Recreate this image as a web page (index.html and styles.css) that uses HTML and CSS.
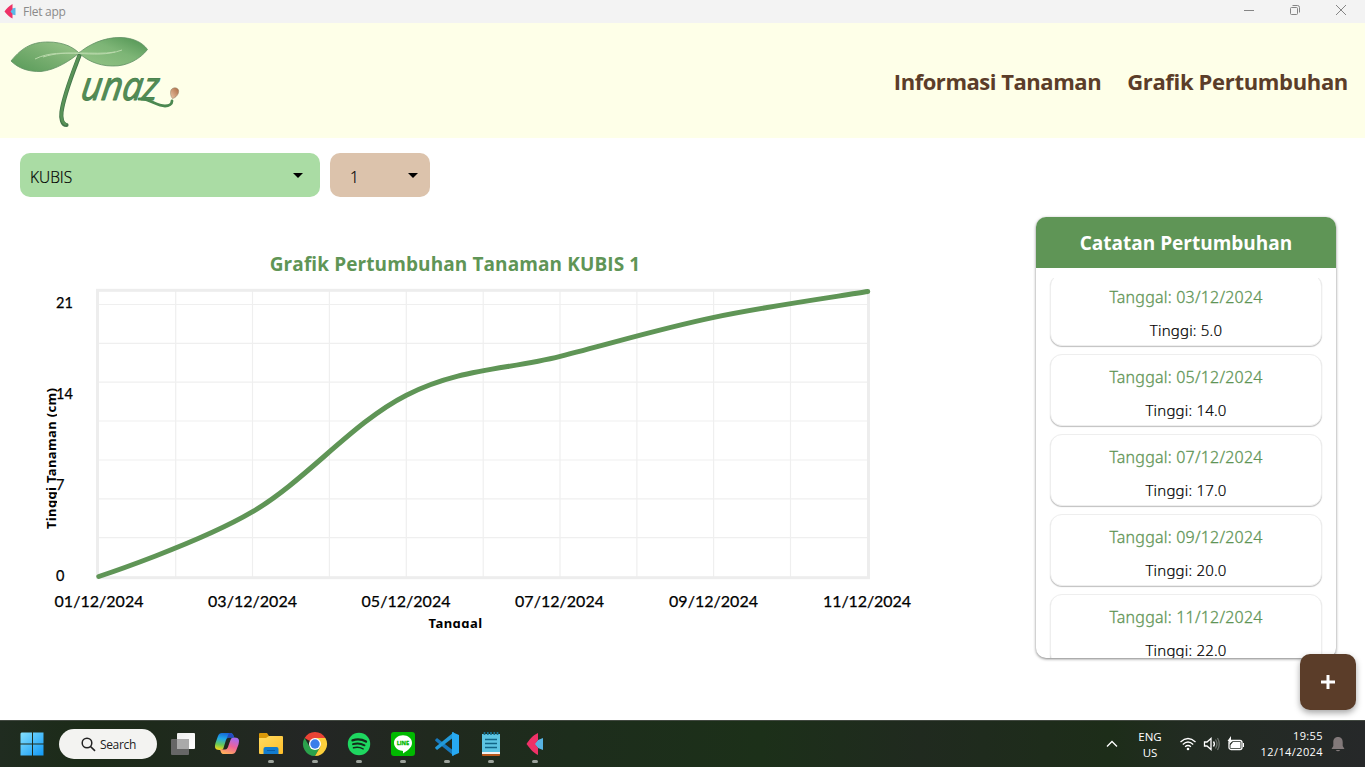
FILE: index.html
```html
<!DOCTYPE html>
<html lang="id">
<head>
<meta charset="utf-8">
<title>Flet app</title>
<link rel="stylesheet" href="styles.css">
</head>
<body>
<div class="titlebar">
  <svg class="app-icon" width="12" height="16" viewBox="0 0 12 16"><path d="M8 4.5l3.5-.8v7.6L8 10.500 5.500 7.500z" fill="#5cb8e8"/><path d="M8.500 0v5L6.500 7.500l2 2.500v4.500C5.500 13.500 2.500 10 .5 7.500 2.500 4.500 5.500 1.500 8.500 0z" fill="#ee3167"/></svg>
  <span class="app-title">Flet app</span>
  <div class="window-buttons">
    <svg width="12" height="12" viewBox="0 0 12 12"><path d="M1 6.500h10"/></svg>
    <svg width="12" height="12" viewBox="0 0 12 12"><rect x="1.500" y="3.500" width="7" height="7" rx="1"/><path d="M3.500 1.500h5a2 2 0 0 1 2 2v5"/></svg>
    <svg width="12" height="12" viewBox="0 0 12 12"><path d="M1 1l10 10M11 1L1 11"/></svg>
  </div>
</div>

<header class="header">
  <svg class="logo" width="200" height="115" viewBox="0 23 200 115" role="img" aria-label="Tunaz">
    <defs>
      <linearGradient id="leafA" x1="0" y1="1" x2="1" y2="0"><stop offset="0" stop-color="#579a58"/><stop offset=".5" stop-color="#78ae70"/><stop offset="1" stop-color="#9bc78b"/></linearGradient>
      <linearGradient id="leafB" x1="0" y1="1" x2="1" y2="0"><stop offset="0" stop-color="#94c486"/><stop offset=".55" stop-color="#7db576"/><stop offset="1" stop-color="#4d9150"/></linearGradient>
      <linearGradient id="seed" x1="0" y1="1" x2="1" y2="0"><stop offset="0" stop-color="#edc8aa"/><stop offset="1" stop-color="#a9683f"/></linearGradient>
    </defs>
    <path d="M80 54C74 70 64 94 61.500 112c-.8 6 .5 13 5 13" fill="none" stroke="#44764c" stroke-width="4.200" stroke-linecap="round"/>
    <path d="M79 56C73 72 64 94 61.500 112c-.6 5 .5 11 4 12" fill="none" stroke="#599357" stroke-width="2.600" stroke-linecap="round"/>
    <path d="M11 61C23 46 34 42 48 42c15 0 25 5 31 11-8 7-23 17-38 18.500C28 72 18 68 11 61z" fill="url(#leafA)" stroke="#5f8f63" stroke-width=".8"/>
    <path d="M79 53c9-8 25-16 42-15.500 12 .5 21 4.500 26.500 12-7 9-20 17-35 16.500C97 66 85 59 79 53z" fill="url(#leafB)" stroke="#5f8f63" stroke-width=".8"/>
    <path d="M35 59c14-7 29-6 44-5.500 14 .5 28 2 43-3.500M43 57c12-4 24-4 36-4 13 0 25 1 36-1" fill="none" stroke="#b9d9ab" stroke-width="1"/>
    <text class="logo-text" x="0" y="0" textLength="77" lengthAdjust="spacingAndGlyphs" transform="translate(80 100) skewX(-8)">unaz</text>
    <path d="M139 99c10-1 17 7 26 7 4 0 7-2 7-5" fill="none" stroke="#4b8850" stroke-width="2.800" stroke-linecap="round"/>
    <path d="M171 90c2-3 6-3 7.500 0 1 4-3 8-6 8.500-2-2-2.500-6-1.500-8.500z" fill="url(#seed)" stroke="#8b7a60" stroke-width=".5"/>
  </svg>
  <nav class="nav"><a class="nav-info">Informasi Tanaman</a><a class="nav-graph">Grafik Pertumbuhan</a></nav>
</header>

<main class="main">
  <section class="left">
    <div class="filters">
      <div class="select select-plant"><span>KUBIS</span><i class="caret"></i></div>
      <div class="select select-number"><span>1</span><i class="caret"></i></div>
    </div>
    <h1 class="chart-title"><span>Grafik Pertumbuhan Tanaman KUBIS 1</span></h1>
    <svg class="chart" width="920" height="360" viewBox="0 280 920 360">
      <defs>
        <clipPath id="clipY"><rect x="40" y="380" width="17" height="160"/></clipPath>
        <clipPath id="clipX"><rect x="420" y="610" width="70" height="18"/></clipPath>
      </defs>
      <g class="grid">
        <path d="M175.700 290v287M252.500 290v287M329.400 290v287M406.300 290v287M483.200 290v287M560 290v287M636.900 290v287M713.600 290v287M790.500 290v287"/>
        <path d="M98 304.500h770M98 343.400h770M98 382.200h770M98 421h770M98 460h770M98 498.800h770M98 537.600h770"/>
      </g>
      <rect class="frame" x="97.500" y="290.300" width="771" height="287.400"/>
      <path class="curve" d="M98.800 576.500C98.800 576.500 198.800 543.400 252.600 511.700C306.400 480 352.600 422.400 406.400 395.200C460.200 368 506.400 369.900 560.200 356.300C614 342.700 660.100 328.700 713.900 317.400C767.700 306.100 840.800 296 867.700 291.500"/>
      <g class="y-labels">
        <text x="56" y="308" textLength="17">21</text><text x="56" y="399" textLength="17">14</text><text x="56" y="490">7</text><text x="56" y="581">0</text>
      </g>
      <g class="x-labels">
        <text x="54.500" y="607" textLength="89">01/12/2024</text><text x="208" y="607" textLength="89">03/12/2024</text><text x="361.500" y="607" textLength="89">05/12/2024</text><text x="515" y="607" textLength="89">07/12/2024</text><text x="669" y="607" textLength="89">09/12/2024</text><text x="823" y="607" textLength="88">11/12/2024</text>
      </g>
      <g clip-path="url(#clipY)"><text class="axis" transform="translate(55.500 529) rotate(-90)" textLength="141">Tinggi Tanaman (cm)</text></g>
      <g clip-path="url(#clipX)"><text class="axis" x="428.500" y="627.500" textLength="53.500">Tanggal</text></g>
    </svg>
  </section>

  <aside class="panel">
    <h2 class="panel-title"><span>Catatan Pertumbuhan</span></h2>
    <div class="records">
      <div class="record record-first"><p class="date">Tanggal: 03/12/2024</p><p class="height">Tinggi: 5.0</p></div>
      <div class="record"><p class="date">Tanggal: 05/12/2024</p><p class="height">Tinggi: 14.0</p></div>
      <div class="record"><p class="date">Tanggal: 07/12/2024</p><p class="height">Tinggi: 17.0</p></div>
      <div class="record"><p class="date">Tanggal: 09/12/2024</p><p class="height">Tinggi: 20.0</p></div>
      <div class="record"><p class="date">Tanggal: 11/12/2024</p><p class="height">Tinggi: 22.0</p></div>
    </div>
  </aside>
  <button class="fab" aria-label="Tambah"><svg width="14" height="14" viewBox="0 0 14 14"><path d="M7 0v14M0 7h14" stroke="#fff" stroke-width="3"/></svg></button>
</main>

<footer class="taskbar">
  <div class="apps">
    <div class="start"><svg width="24" height="24" viewBox="0 0 24 24"><defs><linearGradient id="win" x1="0" y1="0" x2="1" y2="1"><stop offset="0" stop-color="#84e0ff"/><stop offset="1" stop-color="#1199f5"/></linearGradient></defs><path fill="url(#win)" d="M1.500.5H12v11H.5v-10zM13 .5h10.500v11H13zM.5 12.500H12v11H.5zM13 12.500h10.500v11H13z"/></svg></div>
    <div class="search"><svg width="15" height="15" viewBox="0 0 15 15"><circle cx="6" cy="6" r="4.800" fill="none" stroke="#222" stroke-width="1.500"/><path d="M9.500 9.500l4.500 4.300" stroke="#222" stroke-width="1.600"/></svg><span>Search</span></div>
    <div class="app app-tasks"><svg width="26" height="26" viewBox="0 0 26 26"><defs><linearGradient id="tv" x1="0" y1="0" x2="1" y2="1"><stop offset="0" stop-color="#eee"/><stop offset="1" stop-color="#fff"/></linearGradient></defs><rect x="7" y="1" width="18" height="16" rx="1" fill="url(#tv)"/><rect x="1" y="7" width="18" height="16" rx="1" fill="#666"/><path d="M7 7h12v10H7z" fill="#aaa"/></svg></div>
    <div class="app app-copilot"><svg width="26" height="26" viewBox="0 0 26 26"><defs><linearGradient id="ca" x1=".5" y1="0" x2=".3" y2="1"><stop offset="0" stop-color="#1668d8"/><stop offset=".35" stop-color="#20a9e8"/><stop offset=".7" stop-color="#68c956"/><stop offset="1" stop-color="#f5d71c"/></linearGradient><linearGradient id="cb" x1=".7" y1="0" x2=".3" y2="1"><stop offset="0" stop-color="#a36bf5"/><stop offset=".5" stop-color="#ee6299"/><stop offset="1" stop-color="#ffb05a"/></linearGradient></defs><path d="M8 2h8c3 0 3.500 2 4 4.500h-5c-2 0-3 2-3.500 4L9.500 17c-.5 2-2 2-4 2-5 0-5-3-4-7L4 5c.7-2 2-3 4-3z" fill="url(#ca)"/><path d="M18 23h-8c-3 0-3-2-4-4.500h5c2 0 3-2 3.500-4L16.500 9c.5-2 2-2.500 4-2.500 5 0 5 3 4 7L22 20c-.7 2-2 3-4 3z" fill="url(#cb)"/><path d="M10.500 17.500L14.500 7.500h1.800L12.500 17.500z" fill="#20291f"/><path d="M15 2c3 0 4 1 5 4.500h-5c-1.300 0-2 .6-2.500 1.500z" fill="#264ac0"/></svg></div>
    <div class="app running"><svg width="26" height="26" viewBox="0 0 26 26"><defs><linearGradient id="folder" x1="0" y1="0" x2="1" y2="1"><stop offset="0" stop-color="#ffdc62"/><stop offset="1" stop-color="#ffbd28"/></linearGradient></defs><path d="M1 3q0-1 1-1h7l2 3h6v5H1z" fill="#d99808"/><path d="M1 7h7l3-2h13q1 0 1 1v16q0 1-1 1H2q-1 0-1-1z" fill="url(#folder)"/><path d="M5.500 23v-5q0-2 2-2h11q2 0 2 2v5z" fill="#127ccf"/><path d="M9 19.500h8" stroke="#075ca8"/></svg></div>
    <div class="app running"><svg width="26" height="26" viewBox="0 0 26 26"><path d="M13 13L2.600 7A12 12 0 0 1 23.400 7z" fill="#ea4335"/><path d="M2.600 7A12 12 0 0 0 13 25l5.200-9L13 13 7.800 16z" fill="#2ba24c"/><path d="M23.400 7A12 12 0 0 1 13 25l5.200-9L18 10l-5-3z" fill="#fdd03b"/><circle cx="13" cy="13" r="6" fill="#fff"/><circle cx="13" cy="13" r="4.700" fill="#397eea"/></svg></div>
    <div class="app running"><svg width="26" height="26" viewBox="0 0 26 26"><circle cx="13" cy="13" r="11.200" fill="#1ed760"/><g fill="none" stroke="#142a1b" stroke-linecap="round"><path d="M6.500 9.300c5-1.500 9.500-1 13.500 1.300" stroke-width="2.300"/><path d="M7 13.200c4.500-1.300 8-.8 11.500 1.100" stroke-width="1.900"/><path d="M7.500 16.800c4-1 6.500-.6 9.600 1.100" stroke-width="1.500"/></g></svg></div>
    <div class="app running"><svg width="26" height="26" viewBox="0 0 26 26"><rect x="1" y="1" width="24" height="24" rx="3" fill="#00b900"/><path d="M22 12c0 5-5.500 8-9 10.500 0-1 .4-2.500-.7-2.700C7.500 19.300 4 16 4 12c0-4.500 4-7.700 9-7.700s9 3.200 9 7.700z" fill="#fff"/><text class="line-text" x="6.700" y="14" textLength="12.500" lengthAdjust="spacingAndGlyphs">LINE</text></svg></div>
    <div class="app running"><svg width="26" height="26" viewBox="0 0 26 26"><path d="M1 9l2-2 17 13v5L1.500 10z" fill="#1779bd"/><path d="M1 17l2 2L20 6V1L1.500 16z" fill="#229ad9"/><path d="M18 1l7 3v18l-7 3z" fill="#27a9f2"/></svg></div>
    <div class="app running"><svg width="26" height="26" viewBox="0 0 26 26"><rect x="4" y="20" width="18" height="5" rx="1" fill="#b9581b"/><path d="M4 3h18v19H4z" fill="#5dc4e2"/><path d="M4 21h18v2H4z" fill="#f1f1f1"/><path d="M7 8.500h12M7 12.500h12M7 16.500h12" stroke="#126687" stroke-width="1.700"/><path d="M6.500 1v3M9.800 1v3M13 1v3M16.300 1v3M19.500 1v3" stroke="#176f8e" stroke-width="1.700"/></svg></div>
    <div class="app running"><svg width="26" height="26" viewBox="0 0 26 26"><path d="M16 9l5-2v12l-5-2-4-4z" fill="#58b3e3"/><path d="M16 2v7l-3 4 3 4v7C11 22 7 16 4.500 13 7 9 11 4 16 2z" fill="#ee3167"/></svg></div>
  </div>
  <div class="tray">
    <svg class="chevron" width="14" height="10" viewBox="0 0 14 10"><path d="M2 7.500l5-5 5 5"/></svg>
    <div class="language">ENG<br>US</div>
    <svg class="wifi" width="18" height="16" viewBox="0 0 18 16"><path d="M1.500 6Q9-1 16.500 6M3.800 8.400q5.200-4.800 10.400 0M6.100 10.800q2.900-2.600 5.800 0"/><circle cx="9" cy="13" r="1.300"/></svg>
    <svg class="volume" width="18" height="16" viewBox="0 0 18 16"><path d="M1.500 6h2.500l4-3.500v11L4 10H1.500zM10.500 5.500q1.800 2.500 0 5"/><path class="faint" d="M12.500 3.500q3 4.500 0 9M14.500 2q3.500 6 0 12"/></svg>
    <svg class="battery" width="18" height="16" viewBox="0 0 18 16"><rect x="2" y="4.500" width="13" height="9" rx="2"/><path class="filled" d="M6 6h7.500v6h-10V9zM16 7h1v4h-1z"/><path class="bolt" d="M4 0L.5 5h2.300L2 8.500 6.500 4H4z"/></svg>
    <div class="clock">19:55<br>12/14/2024</div>
    <svg class="bell" width="14" height="17" viewBox="0 0 14 17"><path d="M7 1c3.200 0 4.700 2.300 4.700 5v4L13.500 13H.5l1.800-3V6C2.300 3.300 3.800 1 7 1zM4.700 14h4.600Q7 16.500 4.700 14z" fill="#82797a"/></svg>
  </div>
</footer>
</body>
</html>
```
FILE: styles.css
```css
* { box-sizing: border-box; }
body { margin: 0; width: 1365px; height: 767px; overflow: hidden; display: flex; flex-direction: column; background: #fff; font-family: "Open Sans", "Noto Sans", sans-serif; color: #000; }
svg { display: block; flex: none; }
h1, h2, p { margin: 0; }

.titlebar { height: 23px; flex: none; background: #f3f3f3; display: flex; align-items: center; padding-left: 4px; }
.app-icon { margin-right: 7px; }
.app-title { font-size: 12px; line-height: 22px; color: #8a8a8a; letter-spacing: -.25px; }
.window-buttons { margin-left: auto; display: flex; gap: 34px; padding: 0 18px 3px 0; }
.window-buttons svg { fill: none; stroke: #858585; stroke-width: 1; }

.header { height: 115px; flex: none; background: #feffe8; display: flex; justify-content: space-between; }
.logo-text { font: italic 400 40px "Open Sans", sans-serif; fill: #538e55; stroke: #4b8250; stroke-width: 1px; stroke-linejoin: round; }
.nav { display: flex; gap: 26px; padding: 42px 17px 0 0; color: #5b3d29; font-size: 22px; font-weight: 700; line-height: 32px; white-space: nowrap; }
.nav-info { letter-spacing: -.47px; }
.nav-graph { letter-spacing: -.33px; }

.main { height: 582px; flex: none; position: relative; display: flex; justify-content: space-between; padding-right: 29px; }
.left { width: 920px; padding-top: 15px; }
.filters { display: flex; gap: 10px; padding-left: 20px; }
.select { height: 44px; border-radius: 10px; display: flex; align-items: center; justify-content: space-between; font-size: 15.5px; font-weight: 300; -webkit-text-stroke: .2px #000; }
.select span { padding-top: 3px; }
.select-plant { width: 300px; background: #aadca4; padding: 0 17px 0 10px; letter-spacing: 0; }
.select-number { width: 100px; background: #dcc3ac; padding: 0 12px 0 20px; }
.caret { border: 5px solid transparent; border-top-color: #000; border-bottom: 0; }
.chart-title { height: 83px; padding: 52px 10px 0 0; text-align: center; font-size: 19px; line-height: 30px; color: #5f9556; white-space: nowrap; letter-spacing: .1px; }
.grid { fill: none; stroke: #efefef; stroke-width: 1.200; }
.frame { fill: none; stroke: #ededed; stroke-width: 3; }
.curve { fill: none; stroke: #5f9556; stroke-width: 5; stroke-linecap: round; }
.y-labels, .x-labels { font-family: Lato, sans-serif; stroke: #000; stroke-width: .25px; }
.y-labels { font-size: 14.500px; }
.x-labels { font-size: 16px; }
.axis { font: 700 13px "Noto Sans", sans-serif; }

.panel { width: 300px; height: 441px; margin-top: 79px; overflow: hidden; border-radius: 10px; background: #fff; box-shadow: 0 1px 3px rgba(0,0,0,.5); }
.panel-title { height: 51px; background: #5f9556; color: #fff; text-align: center; font-size: 19px; line-height: 52px; }
.records { margin-top: 10px; height: 380px; overflow: hidden; padding: 0 14px; display: flex; flex-direction: column; gap: 8px; }
.record { height: 72px; flex: none; border: 1px solid #eee; border-radius: 12px; padding-top: 10px; text-align: center; font-family: "Noto Sans", sans-serif; font-weight: 300; background: #fff; box-shadow: 0 1px 1px rgba(0,0,0,.25); }
.record-first { margin-top: -4px; }
.date { color: #5f9556; font-size: 16px; line-height: 24px; letter-spacing: .22px; -webkit-text-stroke: .3px #5f9556; }
.height { font-size: 15px; line-height: 24px; margin-top: 9px; letter-spacing: .2px; -webkit-text-stroke: .2px #000; }
.fab { position: absolute; left: 1300px; top: 516px; width: 56px; height: 56px; padding: 0; border: 0; border-radius: 10px; display: grid; place-items: center; background: #5b3d29; box-shadow: 0 3px 6px rgba(0,0,0,.35); }

.taskbar { height: 47px; flex: none; border-top: 1px solid #424941; display: flex; justify-content: space-between; color: #fff; background: linear-gradient(90deg, #202c20 0, #1c2b18 90px, #20291f 220px, #242625 310px, #20291e 430px, #1d2d1c 570px, #1c3019 760px, #202a1f 920px, #1d2d19 1110px, #222b22 1190px, #262829 1365px); }
.apps { display: flex; align-items: center; padding-left: 20px; }
.start { width: 39px; }
.search { width: 98px; height: 30px; margin-right: 4px; border-radius: 15px; display: flex; align-items: center; gap: 4px; padding-left: 22px; background: #f3f3f1; color: #222; font-size: 12px; letter-spacing: -.35px; }
.app { width: 44px; height: 46px; display: grid; justify-content: center; align-content: start; padding-top: 10px; }
.app-tasks { padding-top: 11px; }
.running::after { content: ""; width: 6px; height: 3px; border-radius: 2px; margin: 3px auto 0; background: #9ca29b; }
.line-text { font: 700 6px "Open Sans", sans-serif; fill: #00b900; stroke: #00b900; stroke-width: .3px; }
.tray { display: flex; align-items: center; padding-right: 20px; font-size: 11px; line-height: 16px; }
.tray svg { fill: none; stroke: #fff; stroke-width: 1.300; }
.language { width: 40px; margin: 2px 9px 0 11px; text-align: center; font-size: 11.5px; }
.volume { margin-left: 6px; }
.tray .volume .faint { stroke: #69706a; }
.battery { margin-left: 6px; margin-right: 1px; }
.battery .filled, .battery .bolt, .wifi circle { fill: #fff; stroke: none; }
.clock { width: 77px; margin-right: 8px; text-align: right; white-space: nowrap; letter-spacing: .4px; }
.tray .bell { stroke: none; }
```
